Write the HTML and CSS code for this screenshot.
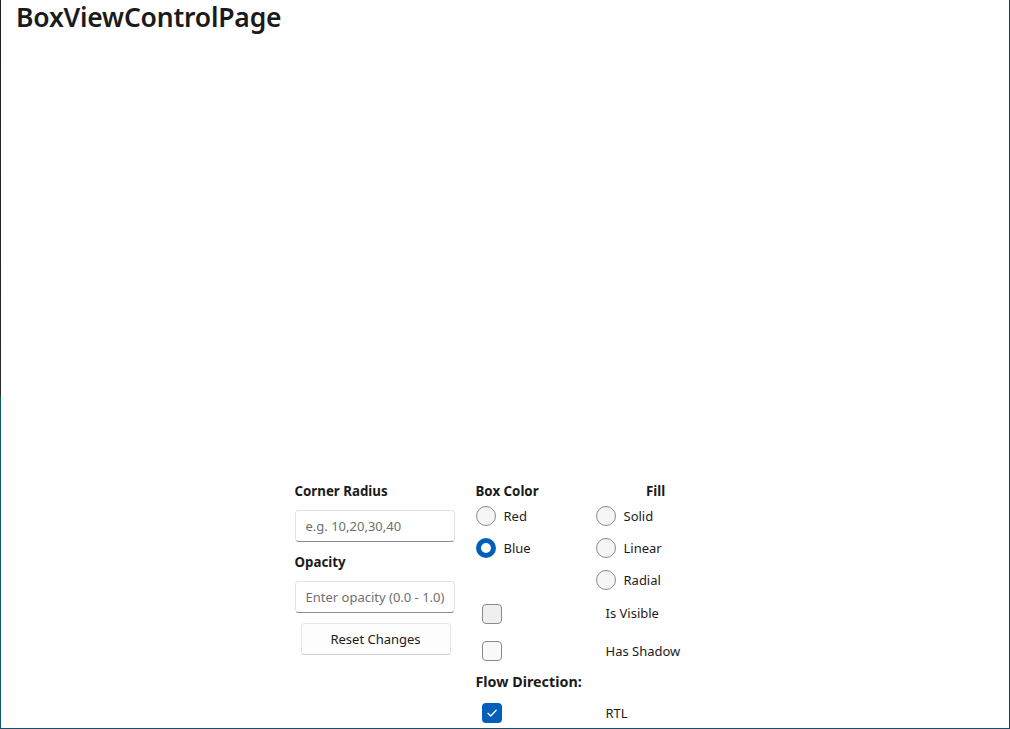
FILE: index.html
```html
<!DOCTYPE html>
<html>
<head>
<meta charset="utf-8">
<link rel="stylesheet" href="styles.css">
</head>
<body>
<div class="window">
  <div class="content">
    <h1 class="title">BoxViewControlPage</h1>
    <div class="box-area"></div>
    <div class="controls">
      <div class="col-left">
        <div class="label">Corner Radius</div>
        <input class="entry" type="text" placeholder="e.g. 10,20,30,40">
        <div class="label label-gap">Opacity</div>
        <input class="entry" type="text" placeholder="Enter opacity (0.0 - 1.0)">
        <button class="btn">Reset Changes</button>
      </div>
      <div class="col-right">
        <div class="label head">Box Color</div>
        <div class="label head center">Fill</div>

        <div class="radio-row"><span class="radio"></span><span class="opt">Red</span></div>
        <div class="radio-row"><span class="radio"></span><span class="opt">Solid</span></div>

        <div class="radio-row"><span class="radio checked"></span><span class="opt">Blue</span></div>
        <div class="radio-row"><span class="radio"></span><span class="opt">Linear</span></div>

        <div class="radio-row"></div>
        <div class="radio-row"><span class="radio"></span><span class="opt">Radial</span></div>

        <div class="check-row r1"><span class="check hover"></span></div>
        <div class="check-row r1"><span class="opt indent">Is Visible</span></div>

        <div class="check-row r2"><span class="check"></span></div>
        <div class="check-row r2"><span class="opt indent">Has Shadow</span></div>

        <div class="label span2 flow">Flow Direction:</div>

        <div class="check-row r3"><span class="check checked"><svg viewBox="0 0 20 20" width="20" height="20"><path d="M6 10.3 L8.7 13 L14.2 7.2" fill="none" stroke="#fff" stroke-width="1.3" stroke-linecap="round" stroke-linejoin="round"/></svg></span></div>
        <div class="check-row r3"><span class="opt indent">RTL</span></div>
      </div>
    </div>
  </div>
</div>
</body>
</html>
```

FILE: styles.css
```css
html, body {
  margin: 0;
  padding: 0;
  background: #ffffff;
}

.window {
  width: 1010px;
  height: 729px;
  box-sizing: border-box;
  padding-left: 1px;
  border-right: 1px solid #1d3b5e;
  border-bottom: 1px solid #1c4d6a;
  background: linear-gradient(to bottom, #1e1e1e 0, #2a2a2a 396px, #0e5a76 396px, #0e5a76 100%);
  overflow: hidden;
  display: flex;
}

.content {
  flex: 1;
  background: #ffffff;
  display: flex;
  flex-direction: column;
  overflow: hidden;
  font-family: "Noto Sans", "Open Sans", sans-serif;
  color: #1b1b1b;
}

.title {
  margin: 0;
  padding: 0 0 0 15px;
  font-size: 26.5px;
  font-weight: 600;
  line-height: 34px;
  color: #1b1b1b;
  letter-spacing: -0.2px;
}

.box-area {
  height: 448px;
  flex: none;
}

.controls {
  display: flex;
  justify-content: center;
}

.col-left {
  width: 160px;
  margin-right: 21px;
  display: flex;
  flex-direction: column;
}

.label {
  font-size: 13.3px;
  font-weight: 700;
  line-height: 19px;
  height: 19px;
  white-space: nowrap;
}

.label.head {
  height: 18px;
}

.label-gap {
  margin-top: 11px;
}

.entry {
  margin-top: 9px;
  width: 160px;
  height: 32px;
  box-sizing: border-box;
  border: 1px solid #e3e3e3;
  border-bottom: 1px solid #8c8c8c;
  border-radius: 4px;
  background: #ffffff;
  padding: 0 0 1px 10px;
  font-family: "Noto Sans", "Open Sans", sans-serif;
  font-size: 13px;
  color: #1b1b1b;
  outline: none;
}

.entry::placeholder {
  color: #6f6f6f;
}

.btn {
  margin: 10px 0 0 6px;
  width: 150px;
  height: 32px;
  box-sizing: border-box;
  border: 1px solid #e5e5e5;
  border-bottom-color: #cccccc;
  border-radius: 4px;
  background: #fdfdfd;
  font-family: "Noto Sans", "Open Sans", sans-serif;
  font-size: 13px;
  color: #1b1b1b;
  padding: 0 0 1px 0;
}

.col-right {
  width: 240px;
  display: grid;
  grid-template-columns: 120px 120px;
  align-content: start;
}

.center {
  text-align: center;
}

.radio-row {
  height: 32px;
  display: flex;
  align-items: center;
}

.radio {
  width: 20px;
  height: 20px;
  box-sizing: border-box;
  border-radius: 50%;
  border: 1px solid #8a8a8a;
  background: #f6f6f6;
  flex: none;
}

.radio.checked {
  border: 5px solid #005fb8;
  background: #ffffff;
}

.opt {
  font-size: 13px;
  line-height: 19px;
  margin-left: 8px;
  white-space: nowrap;
}

.opt.indent {
  margin-left: 10px;
}

.check-row {
  display: flex;
  align-items: center;
}

.r1 {
  height: 35px;
}

.r2 {
  height: 40px;
}

.r3 {
  height: 24px;
}

.flow {
  grid-column: span 2;
  font-size: 14.3px;
  margin-top: 1px;
  margin-bottom: 10px;
}

.check {
  width: 20px;
  height: 20px;
  box-sizing: border-box;
  border: 1px solid #8a8a8a;
  border-radius: 4px;
  background: #f9f9f9;
  margin-left: 6px;
  display: block;
}

.check.hover {
  background: #efefef;
}

.check.checked {
  border: none;
  background: #005fb8;
}

.check svg {
  display: block;
}
```
